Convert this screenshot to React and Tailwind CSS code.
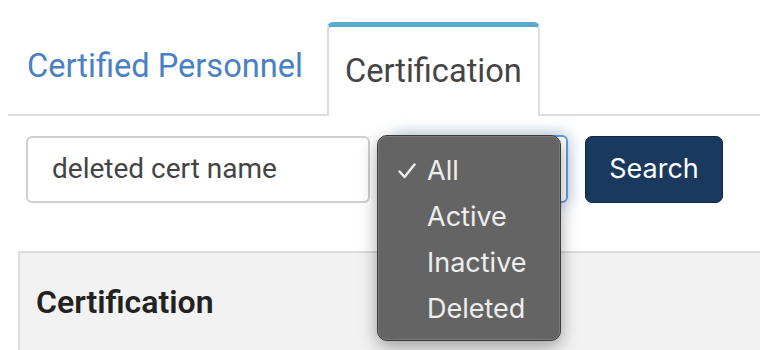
import React from "react";

export default function App() {
  return (
    <div className="w-[760px] h-[350px] overflow-hidden bg-white relative" style={{ fontFamily: "Roboto, 'Liberation Sans', sans-serif" }}>
      {/* Tabs */}
      <div className="ml-2 flex items-end border-b-2 border-[#dddddd] pt-[22px]">
        <div className="pl-[19px] pr-[24px] pt-[26px] pb-[30px] text-[32.6px] leading-[36px] text-[#4a80c4] whitespace-nowrap">
          Certified Personnel
        </div>
        <div className="-mb-[2px] bg-white border-x-2 border-t-[5px] border-x-[#dddddd] border-t-[#5aaacf] rounded-t-[6px] px-4 pt-[26px] pb-[27px] text-[32.6px] leading-[36px] text-[#444444] whitespace-nowrap">
          Certification
        </div>
      </div>

      {/* Filter row */}
      <div className="flex items-center pl-[26px] pt-[19px]">
        <div className="w-[344px] h-[67px] border-2 border-[#cfcfcf] rounded-[6px] flex items-center pl-[24px] text-[28px] text-[#444444]">
          deleted cert name
        </div>
        <div className="ml-[28px] w-[170px] h-[68px] border-2 border-[#5b9de6] rounded-[6px] bg-white shadow-[0_0_14px_4px_rgba(120,160,210,0.35)]"></div>
        <div className="ml-[17px] w-[138px] h-[67px] rounded-[7px] bg-[#193a5e] border-[1.5px] border-[#0f2740] flex items-center justify-center text-white text-[27px]" style={{ fontFamily: "Inter, 'Liberation Sans', sans-serif" }}>
          Search
        </div>
      </div>

      {/* Panel */}
      <div className="ml-[18px] mt-[48px] border-t-2 border-l-2 border-[#dcdcdc] bg-[#f2f2f2] h-[120px] pl-[16px] pt-[31px]">
        <div className="text-[32px] leading-[36px] font-semibold text-[#222222] whitespace-nowrap">Certification</div>
      </div>

      {/* Dropdown menu overlay */}
      <div className="absolute left-[377px] top-[135px] w-[184px] h-[206px] rounded-[10px] bg-[#646464] border border-[#3b3b3b] shadow-[0_6px_18px_rgba(0,0,0,0.35)] pt-[12px] text-[#eeeeee] text-[27px]" style={{ fontFamily: "Inter, 'Liberation Sans', sans-serif" }}>
        <div className="rounded-[9px] absolute inset-0 border border-[#7a7a7a] pointer-events-none"></div>
        {[
          ["All", true],
          ["Active", false],
          ["Inactive", false],
          ["Deleted", false],
        ].map(([label, checked]) => (
          <div key={label} className="h-[46px] flex items-center">
            <div className="w-[49px] flex justify-end pr-[11px]">
              {checked ? (
                <svg width="18" height="16" viewBox="0 0 18 16" fill="none">
                  <path d="M1.5 8.5 L6.5 14 L16.5 1.5" stroke="#eeeeee" strokeWidth="2.4" strokeLinecap="round" strokeLinejoin="round" />
                </svg>
              ) : null}
            </div>
            <span>{label}</span>
          </div>
        ))}
      </div>
    </div>
  );
}
